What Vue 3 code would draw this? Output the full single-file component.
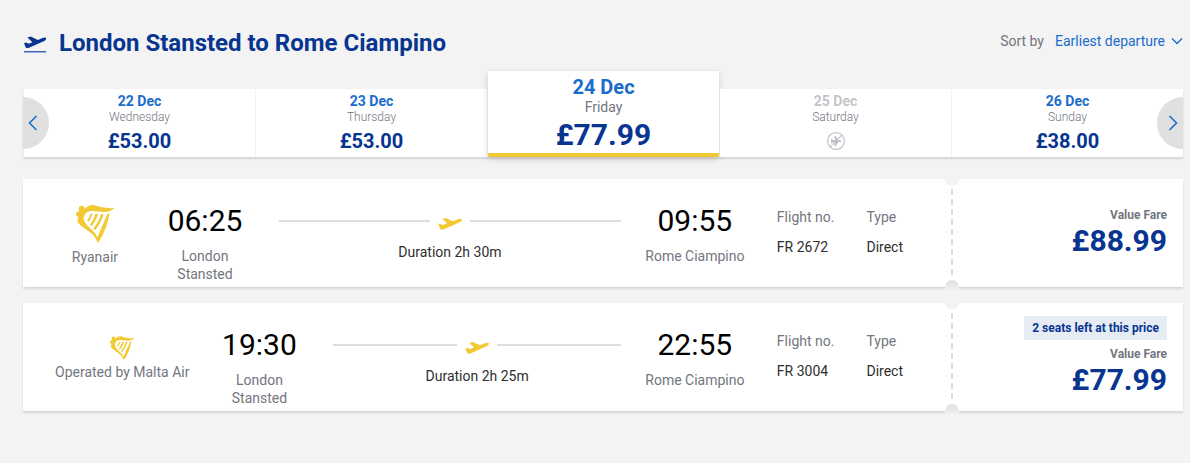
<script setup>
import { ref } from 'vue'

const sort = ref('Earliest departure')
const selected = ref('24 Dec')

const dates = [
  { date: '22 Dec', day: 'Wednesday', price: '£53.00' },
  { date: '23 Dec', day: 'Thursday', price: '£53.00' },
  { date: '24 Dec', day: 'Friday', price: '£77.99' },
  { date: '25 Dec', day: 'Saturday', price: null },
  { date: '26 Dec', day: 'Sunday', price: '£38.00' }
]

const flights = [
  { no: 'FR 2672', carrier: 'Ryanair', operated: false, dep: '06:25', arr: '09:55', duration: '2h 30m', price: '£88.99' },
  { no: 'FR 3004', carrier: 'Operated by Malta Air', operated: true, dep: '19:30', arr: '22:55', duration: '2h 25m', price: '£77.99', badge: '2 seats left at this price' }
]
</script>

<template>
  <main class="page">
    <header class="header">
      <svg class="takeoff" viewBox="0 0 24 18" aria-hidden="true">
        <path fill="#073590" d="M1 8.2 3 7.6 5.8 8.7 9.4 7.2 4.4 2.6 7.8 1.6 14.9 4.9 19.4 3C21 2.3 22.7 2.2 23.1 3.2c.3 1.1-.8 2.3-2.4 3L6.6 12.5C5.1 13.2 3.5 13.4 2.8 12.6Z" />
        <path fill="#3f66b4" d="M1 16h22v1.5H1z" />
      </svg>
      <h1 class="title">London Stansted to Rome Ciampino</h1>
      <div class="sort">
        <label for="sort">Sort by</label>
        <span class="select-wrap">
          <select id="sort" v-model="sort">
            <option>Earliest departure</option>
            <option>Lowest fare</option>
          </select>
          <svg viewBox="0 0 12 8" aria-hidden="true"><path d="M1 1.5 6 6.5 11 1.5" fill="none" stroke="#1a6dcc" stroke-width="1.4" /></svg>
        </span>
      </div>
    </header>

    <nav class="carousel" aria-label="Dates">
      <button
        v-for="d in dates"
        :key="d.date"
        type="button"
        class="date"
        :class="{ selected: d.date === selected, off: !d.price }"
        :disabled="!d.price"
        @click="selected = d.date"
      >
        <span class="date-name">{{ d.date }}</span>
        <span class="day">{{ d.day }}</span>
        <span v-if="d.price" class="date-price">{{ d.price }}</span>
        <svg v-else class="no-flight" viewBox="0 0 20 20" aria-label="No flights">
          <circle cx="10" cy="10" r="8.4" fill="none" stroke="#c3c5c9" stroke-width="1.3" />
          <path fill="#b9bbc0" d="M4.8 8h1.1l1.2 1.3h2.1L8.2 5.2h1.5l2.5 4.1h2.1c1.4 0 1.4 1.7 0 1.7h-2.1l-2.5 4.1H8.2L9.2 11H7.1l-1.2 1.3H4.8l.6-2.1z" />
          <path d="M4.2 15.8 15.8 4.2" stroke="#c3c5c9" stroke-width="1.2" />
        </svg>
      </button>
      <button type="button" class="arrow prev" aria-label="Earlier dates">
        <svg viewBox="0 0 10 16"><path d="M8.5 1 1.5 8l7 7" /></svg>
      </button>
      <button type="button" class="arrow next" aria-label="Later dates">
        <svg viewBox="0 0 10 16"><path d="M1.5 1l7 7-7 7" /></svg>
      </button>
    </nav>

    <section class="flights">
      <article v-for="f in flights" :key="f.no" class="card">
        <div class="info">
          <div class="carrier" :class="{ operated: f.operated }">
            <svg class="harp" viewBox="0 0 132 132" aria-hidden="true">
              <g fill="#f1c933">
                <circle cx="26" cy="26" r="9" />
                <path d="M35 28C42 18 52 13 65 16 80 21 98 26 124 24 114 33 104 37 92 36 76 35 58 29 43 36 35 42 30 50 33 60 37 73 50 83 58 91 66 99 70 105 73 113L103 42 110 40C104 72 92 106 74 129 71 120 66 111 58 103 46 91 26 81 16 69 11 62 14 55 17 51 13 50 9 46 9 41 10 36 14 35 18 34Z" />
                <path d="M52 41 59 41 48 65 42 62C47 55 50 49 52 41Z" />
                <path d="M67 41 75 42C71 56 64 69 56 79L51 74C59 63 64 53 67 41Z" />
                <path d="M84 42 92 43C87 62 76 79 66 91L61 85C72 72 80 58 84 42Z" />
              </g>
            </svg>
            <span>{{ f.carrier }}</span>
          </div>
          <div class="stop">
            <span class="time">{{ f.dep }}</span>
            <span class="place">London Stansted</span>
          </div>
          <div class="route">
            <div class="line">
              <svg viewBox="0 0 24 12" aria-hidden="true">
                <path fill="#f1c933" d="M.2 6.6 2.4 6 5 7 9.2 5.2 4.4 1 7.8 0 15 3.2 19.8 1.2C21.6.5 23.4.5 23.9 1.4c.3 1.2-1 2.3-2.8 3.1L6.5 11C4.9 11.7 3.1 11.9 2.3 11.1Z" />
              </svg>
            </div>
            <span class="duration">Duration {{ f.duration }}</span>
          </div>
          <div class="stop">
            <span class="time">{{ f.arr }}</span>
            <span class="place">Rome Ciampino</span>
          </div>
          <dl class="details">
            <div><dt>Flight no.</dt><dd>{{ f.no }}</dd></div>
            <div><dt>Type</dt><dd>Direct</dd></div>
          </dl>
        </div>
        <div class="fare">
          <span v-if="f.badge" class="badge">{{ f.badge }}</span>
          <span class="fare-name">Value Fare</span>
          <span class="fare-price">{{ f.price }}</span>
        </div>
      </article>
    </section>
  </main>
</template>

<style>
body {
  margin: 0;
  background: #f3f3f3;
}
</style>

<style scoped>
.page {
  padding: 28px 7px 24px 23px;
  font-family: Roboto, "Liberation Sans", sans-serif;
  font-size: 14px;
  line-height: 18px;
  color: #737680;
}
.page * {
  box-sizing: border-box;
}
button,
select {
  font: inherit;
  border: 0;
  margin: 0;
  padding: 0;
  background: none;
  cursor: pointer;
}
.header {
  display: flex;
  align-items: flex-start;
  margin-bottom: 31px;
}
.takeoff {
  width: 24px;
  height: 18px;
  margin: 7px 12px 0 0;
}
.title {
  margin: 0;
  flex: 1;
  font-size: 24px;
  line-height: 30px;
  font-weight: 700;
  color: #073590;
}
.sort {
  display: flex;
  gap: 11px;
  line-height: 26px;
}
.select-wrap {
  display: flex;
  align-items: center;
  gap: 5px;
}
.select-wrap select {
  appearance: none;
  color: #1a6dcc;
  line-height: 26px;
}
.select-wrap svg {
  width: 12px;
  height: 8px;
}
.carousel {
  position: relative;
  display: grid;
  grid-template-columns: repeat(5, 1fr);
  gap: 1px;
  padding-left: 1px;
  background: #f3f3f3;
  box-shadow: 0 2px 2px rgba(0, 0, 0, 0.12);
}
.date {
  display: flex;
  flex-direction: column;
  align-items: center;
  padding: 4px 0;
  background: #fff;
  color: #737680;
}
.date-name {
  font-weight: 700;
  line-height: 16px;
  color: #1a6dcc;
}
.day {
  font-size: 12px;
  font-weight: 300;
  line-height: 16px;
}
.date-price {
  margin-top: 4px;
  font-size: 20px;
  font-weight: 700;
  line-height: 24px;
  color: #073590;
}
.date.off .date-name {
  color: #c3c5c9;
}
.no-flight {
  width: 20px;
  height: 20px;
  margin-top: 6px;
}
.date.selected {
  margin-top: -18px;
  padding: 4px 0 0;
  border-bottom: 4px solid #f1c933;
  border-radius: 0 0 2px 2px;
  box-shadow: 0 2px 6px rgba(0, 0, 0, 0.16);
}
.selected .date-name {
  font-size: 20px;
  line-height: 24px;
}
.selected .day {
  font-size: 14px;
  font-weight: 400;
}
.selected .date-price {
  margin-top: 2px;
  font-size: 30px;
  line-height: 36px;
}
.arrow {
  position: absolute;
  top: 8px;
  display: flex;
  align-items: center;
  width: 26px;
  height: 52px;
  background: #e0e0e0;
}
.arrow svg {
  width: 10px;
  height: 16px;
  fill: none;
  stroke: #1a6dcc;
  stroke-width: 1.6;
}
.prev {
  left: 0;
  padding-left: 5px;
  border-radius: 0 26px 26px 0;
}
.next {
  right: 0;
  padding-left: 11px;
  border-radius: 26px 0 0 26px;
}
.flights {
  display: grid;
  gap: 16px;
  margin-top: 22px;
}
.card {
  display: grid;
  grid-template-columns: 4fr 1fr;
  min-height: 108px;
  background: #fff;
  box-shadow: 0 2px 2px rgba(0, 0, 0, 0.12);
}
.info {
  display: flex;
  padding: 24px 48px 4px 32px;
}
.carrier {
  display: flex;
  flex-direction: column;
  align-items: center;
  gap: 4px;
  align-self: flex-start;
  min-width: 80px;
  margin: -3px 20px 0 0;
  white-space: nowrap;
}
.harp {
  width: 44px;
  height: 44px;
}
.operated {
  gap: 2px;
  margin-top: 6px;
}
.operated .harp {
  width: 28px;
  height: 28px;
}
.stop {
  display: flex;
  flex-direction: column;
  width: 100px;
  text-align: center;
}
.time {
  font-size: 30px;
  line-height: 36px;
  margin-bottom: 8px;
  color: #000;
}
.place {
  padding: 0 10px;
}
.stop:nth-of-type(4) .place {
  padding: 0;
  white-space: nowrap;
}
.route {
  flex: 1;
  margin: 0 24px;
  text-align: center;
}
.line {
  display: flex;
  align-items: center;
  gap: 8px;
  height: 36px;
  margin-bottom: 4px;
}
.line::before,
.line::after {
  content: "";
  flex: 1;
  height: 2px;
  background: #dedede;
}
.line svg {
  width: 24px;
  height: 12px;
  margin-top: 6px;
}
.duration {
  color: #2e2e2e;
}
.details {
  display: flex;
  gap: 32px;
  margin: 5px 0 0 32px;
  white-space: nowrap;
}
dd {
  margin: 12px 0 0;
  color: #2e2e2e;
}
.fare {
  position: relative;
  display: flex;
  flex-direction: column;
  align-items: flex-end;
  justify-content: center;
  padding-right: 16px;
  background: repeating-linear-gradient(#dedede 0 6px, transparent 6px 10px) 0 10px / 2px 88px no-repeat;
}
/* ticket notches at both ends of the perforation */
.fare::before,
.fare::after {
  content: "";
  position: absolute;
  left: -6px;
  width: 14px;
  background: #f3f3f3;
}
.fare::before {
  top: 0;
  height: 7px;
  border-radius: 0 0 7px 7px;
}
.fare::after {
  bottom: -4px;
  height: 11px;
  border-radius: 7px 7px 0 0;
  background: linear-gradient(#dedede, #f3f3f3);
}
.badge {
  margin-bottom: 6px;
  padding: 0 8px;
  border-radius: 2px;
  background: #e6ebf4;
  color: #073590;
  font-size: 12px;
  font-weight: 700;
  line-height: 24px;
}
.fare-name {
  font-size: 12px;
  font-weight: 700;
  line-height: 16px;
}
.fare-price {
  font-size: 30px;
  font-weight: 700;
  line-height: 36px;
  color: #073590;
}
</style>
